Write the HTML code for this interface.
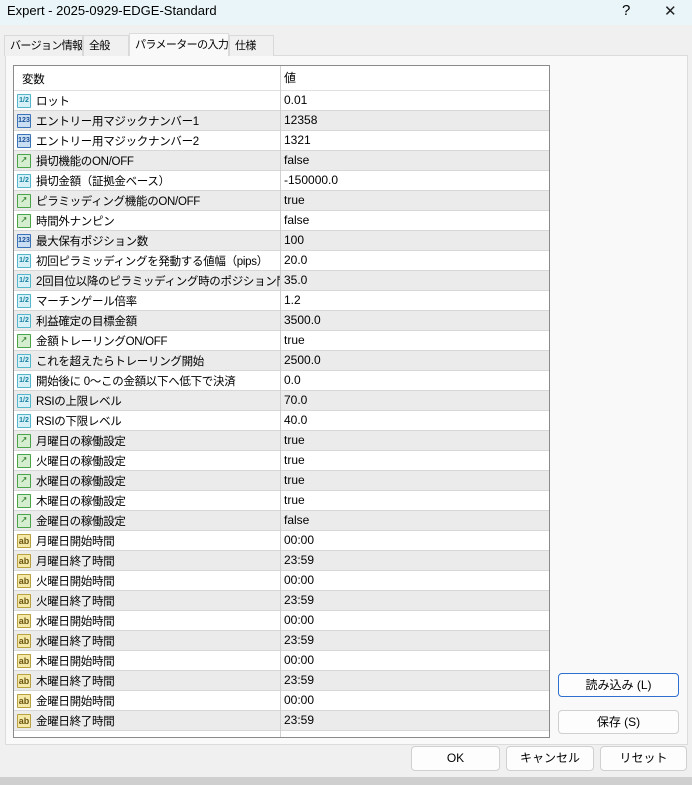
<!DOCTYPE html>
<html><head><meta charset="utf-8"><style>
*{box-sizing:border-box;margin:0;padding:0}
body{width:692px;height:785px;background:#f0f0f0;font-family:"Liberation Sans","Noto Sans CJK JP",sans-serif;font-size:12px;color:#000;position:relative;overflow:hidden}
.title{position:absolute;left:0;top:0;width:692px;height:25px;background:#e9f5f9;font-size:13px;line-height:16px;padding:3px 0 0 7px}
.q{position:absolute;left:622px;top:2px;font-size:15px}
.x{position:absolute;left:664px;top:2px;font-size:15px;color:#222}
.tab{position:absolute;top:35px;height:21px;background:#f0f0f0;border:1px solid #d9d9d9;border-bottom:none;padding:0 0 0 5px;font-size:11px;line-height:20px;white-space:nowrap;overflow:hidden;letter-spacing:-0.6px}
.panel{position:absolute;left:5px;top:55px;width:683px;height:690px;background:#f9f9f9;border:1px solid #dcdcdc}
.tbl{position:absolute;left:13px;top:65px;width:537px;height:673px;background:#fff;border:1px solid #8a8a8a;overflow:hidden}
.row{position:absolute;left:0;width:535px;height:20px;border-bottom:1px solid #d8d8d8;line-height:19px}
.row .n{position:absolute;left:22px;top:2px;white-space:nowrap;width:244px;overflow:hidden;font-size:11.5px;letter-spacing:-0.3px}
.row .v{position:absolute;left:270px;top:0}
.row .ic{position:absolute;left:3px;top:3px;width:14px;height:14px;font-size:7px;line-height:12px;text-align:center;font-weight:bold;border-radius:1px}
.dv{position:absolute;left:266px;top:0;width:1px;height:673px;background:#d0d0d0}
.d{background:#d6f1f7;border:1px solid #55b6cc;color:#1780a0}
.i{background:#c9ddf3;border:1px solid #3a73b8;color:#1a4f93}
.b{background:#d5eecf;border:1px solid #4aa44a;color:#2a7a2a}
.s{background:#f5e9a8;border:1px solid #b9a040;color:#6a5410;font-size:9px!important}
.btn{position:absolute;background:#fdfdfd;border:1px solid #d0d0d0;border-radius:4px;text-align:center;font-size:12px;line-height:22px}
.bot{position:absolute;left:0;top:777px;width:692px;height:8px;background:#cfcfcf}
</style></head><body>
<div class="title">Expert - 2025-0929-EDGE-Standard</div>
<div class="q">?</div><div class="x">✕</div>
<div class="panel"></div>
<div class="tab" style="left:4px;width:79px">バージョン情報</div>
<div class="tab" style="left:83px;width:46px">全般</div>
<div class="tab" style="left:129px;top:33px;height:23px;width:100px;background:#f9f9f9;border-color:#dcdcdc;line-height:22px">パラメーターの入力</div>
<div class="tab" style="left:229px;width:45px">仕様</div>
<div class="tbl">
<div class="row" style="top:0;height:25px;border-bottom:1px solid #e0e0e0;line-height:25px"><span class="n" style="left:8px;top:2px">変数</span><span class="v">値</span></div>
<div id="rows"></div>
<div class="dv"></div>
</div>
<script>
var r=[["d","ロット","0.01"],["i","エントリー用マジックナンバー1","12358"],["i","エントリー用マジックナンバー2","1321"],["b","損切機能のON/OFF","false"],["d","損切金額（証拠金ベース）","-150000.0"],["b","ピラミッディング機能のON/OFF","true"],["b","時間外ナンピン","false"],["i","最大保有ポジション数","100"],["d","初回ピラミッディングを発動する値幅（pips）","20.0"],["d","2回目位以降のピラミッディング時のポジション間隔","35.0"],["d","マーチンゲール倍率","1.2"],["d","利益確定の目標金額","3500.0"],["b","金額トレーリングON/OFF","true"],["d","これを超えたらトレーリング開始","2500.0"],["d","開始後に 0〜この金額以下へ低下で決済","0.0"],["d","RSIの上限レベル","70.0"],["d","RSIの下限レベル","40.0"],["b","月曜日の稼働設定","true"],["b","火曜日の稼働設定","true"],["b","水曜日の稼働設定","true"],["b","木曜日の稼働設定","true"],["b","金曜日の稼働設定","false"]];
var days=["月","火","水","木","金"];days.forEach(function(d){r.push(["s",d+"曜日開始時間","00:00"]);r.push(["s",d+"曜日終了時間","23:59"]);});
var h="";r.forEach(function(x,k){var t={d:"1/2",i:"123",b:"↗",s:"ab"}[x[0]];
var nm=x[1];if(k==9)nm="2回目位以降のピラミッディング時のポジション間･..";
h+='<div class="row" style="top:'+(25+k*20)+'px;background:'+(k%2?'#ebebeb':'#fff')+'"><span class="ic '+x[0]+'">'+t+'</span><span class="n">'+nm+'</span><span class="v">'+x[2]+'</span></div>';});
document.getElementById("rows").innerHTML=h;
</script>
<div class="btn" style="left:558px;top:673px;width:121px;height:24px;border:1px solid #2f6fcf">読み込み (L)</div>
<div class="btn" style="left:558px;top:710px;width:121px;height:24px">保存 (S)</div>
<div class="btn" style="left:411px;top:746px;width:89px;height:25px">OK</div>
<div class="btn" style="left:506px;top:746px;width:88px;height:25px">キャンセル</div>
<div class="btn" style="left:600px;top:746px;width:87px;height:25px">リセット</div>
<div class="bot"></div>
</body></html>
